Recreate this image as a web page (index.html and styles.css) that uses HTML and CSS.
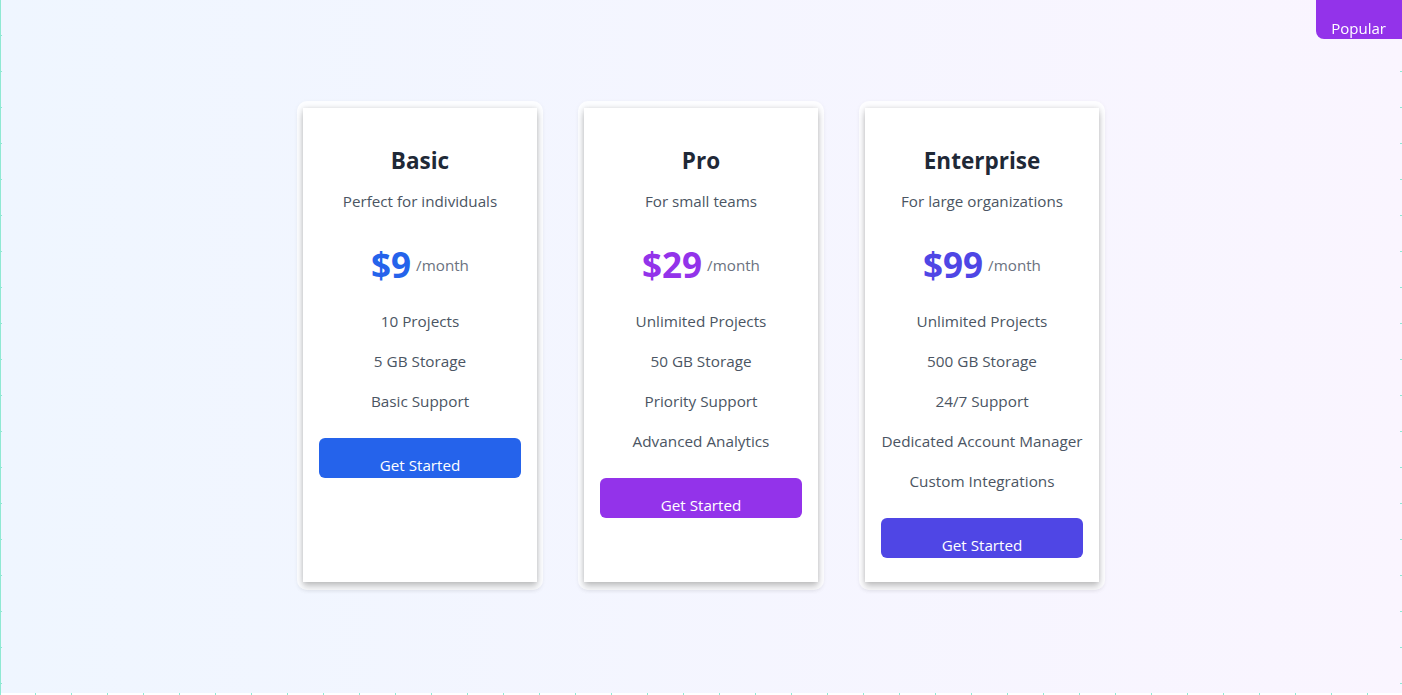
FILE: index.html
```html
<!DOCTYPE html>
<html lang="en">
<head>
<meta charset="utf-8">
<title>Pricing</title>
<link rel="stylesheet" href="styles.css">
</head>
<body>
<div class="rulers" aria-hidden="true"></div>
<div class="badge">Popular</div>
<main class="page">
  <section class="plans">
    <div class="plan-wrap">
      <article class="plan plan-basic">
        <h3 class="plan-title">Basic</h3>
        <p class="plan-sub">Perfect for individuals</p>
        <div class="plan-price"><span class="amount">$9</span><span class="per">/month</span></div>
        <ul class="features">
          <li>10 Projects</li>
          <li>5 GB Storage</li>
          <li>Basic Support</li>
        </ul>
        <button class="cta">Get Started</button>
      </article>
    </div>
    <div class="plan-wrap">
      <article class="plan plan-pro">
        <h3 class="plan-title">Pro</h3>
        <p class="plan-sub">For small teams</p>
        <div class="plan-price"><span class="amount">$29</span><span class="per">/month</span></div>
        <ul class="features">
          <li>Unlimited Projects</li>
          <li>50 GB Storage</li>
          <li>Priority Support</li>
          <li>Advanced Analytics</li>
        </ul>
        <button class="cta">Get Started</button>
      </article>
    </div>
    <div class="plan-wrap">
      <article class="plan plan-ent">
        <h3 class="plan-title">Enterprise</h3>
        <p class="plan-sub">For large organizations</p>
        <div class="plan-price"><span class="amount">$99</span><span class="per">/month</span></div>
        <ul class="features">
          <li>Unlimited Projects</li>
          <li>500 GB Storage</li>
          <li>24/7 Support</li>
          <li>Dedicated Account Manager</li>
          <li>Custom Integrations</li>
        </ul>
        <button class="cta">Get Started</button>
      </article>
    </div>
  </section>
</main>
</body>
</html>
```

FILE: styles.css
```css
* { box-sizing: border-box; }
html { background: #ffffff; }
body {
  margin: 0;
  font-family: "Open Sans", "Noto Sans", sans-serif;
  color: #1f2937;
}
.page {
  min-height: 693px;
  background: linear-gradient(to right, #eff6ff, #faf5ff);
  padding-top: 101px;
}
.rulers {
  position: fixed;
  inset: 0;
  pointer-events: none;
  z-index: 5;
  background-image:
    linear-gradient(#8fe9d3, #8fe9d3),
    linear-gradient(to bottom, transparent 35px, #8fe9d3 35px, #8fe9d3 36px),
    linear-gradient(to right, transparent 35px, #8fe9d3 35px, #8fe9d3 36px),
    linear-gradient(to bottom, transparent 35px, #8fe9d3 35px, #8fe9d3 36px);
  background-size: 1px 100%, 2px 36px, 36px 2px, 2px 36px;
  background-repeat: no-repeat, repeat-y, repeat-x, repeat-y;
  background-position: left top, left top, left bottom, right top;
}
.badge {
  position: absolute;
  top: 0;
  right: 0;
  z-index: 10;
  background: #9333ea;
  color: #ffffff;
  font-size: 15px;
  line-height: 20px;
  padding: 18px 16px 0 15px;
  height: 39px;
  border-bottom-left-radius: 8px;
}
.plans {
  display: flex;
  justify-content: center;
  align-items: stretch;
  gap: 35px;
}
.plan-wrap {
  width: 246px;
  padding: 7px 6px 8px;
  border-radius: 10px;
  background: rgba(255, 255, 255, 0.75);
  box-shadow: 0 1px 4px rgba(0, 0, 0, 0.05);
  display: flex;
}
.plan {
  flex: 1;
  background: #ffffff;
  box-shadow: 0 5px 7px rgba(0, 0, 0, 0.2), 0 0 5px rgba(0, 0, 0, 0.14);
  padding: 37px 16px 24px;
  text-align: center;
  display: flex;
  flex-direction: column;
  min-height: 474px;
}
.plan-title {
  margin: 0;
  font-size: 22.5px;
  line-height: 32px;
  font-weight: 700;
  color: #1f2937;
}
.plan-sub {
  margin: 13px 0 0;
  font-size: 15.2px;
  line-height: 22px;
  color: #4b5563;
}
.plan-price {
  margin-top: 33px;
  height: 40px;
  display: flex;
  justify-content: center;
  align-items: center;
  gap: 5px;
}
.amount {
  font-size: 35px;
  line-height: 40px;
  font-weight: 700;
}
.per {
  font-size: 15.2px;
  line-height: 20px;
  color: #6b7280;
}
.plan-basic .amount { color: #2563eb; }
.plan-pro .amount { color: #9333ea; }
.plan-ent .amount { color: #4f46e5; }
.features {
  list-style: none;
  margin: 24px 0 0;
  padding: 0;
  display: flex;
  flex-direction: column;
  gap: 16px;
  font-size: 15.3px;
  line-height: 24px;
  color: #4b5563;
}
.cta {
  margin-top: 25px;
  height: 40px;
  width: 100%;
  border: 0;
  border-radius: 6px;
  color: #ffffff;
  font-family: inherit;
  font-size: 15.2px;
  line-height: 20px;
  padding: 14px 0 0;
}
.plan-basic .cta { background: #2563eb; }
.plan-pro .cta { background: #9333ea; }
.plan-ent .cta { background: #4f46e5; }
```
